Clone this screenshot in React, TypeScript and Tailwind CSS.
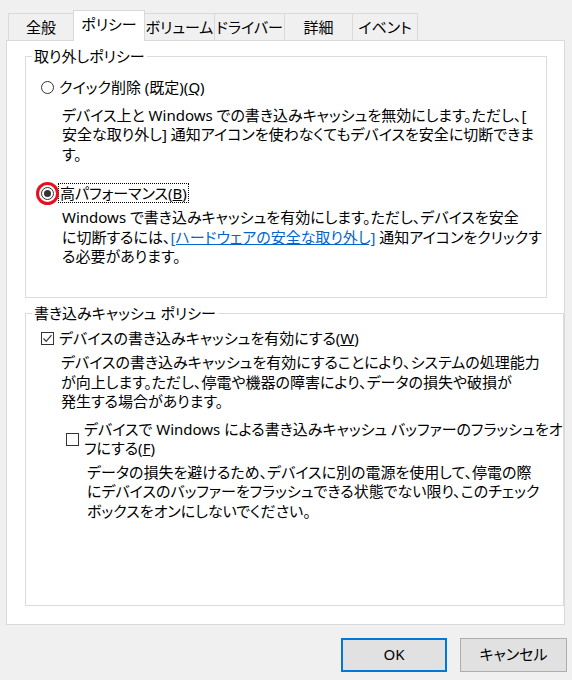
import React from "react";

const Radio = ({ checked }: { checked?: boolean }) => (
  <span className="relative flex h-[13px] w-[13px] shrink-0 items-center justify-center rounded-full border border-[#333333] bg-white">
    {checked && <span className="h-[7px] w-[7px] rounded-full bg-[#333333]" />}
  </span>
);

const Check = ({ checked }: { checked?: boolean }) => (
  <span className="flex h-[13px] w-[13px] shrink-0 items-center justify-center border border-[#333333] bg-white">
    {checked && (
      <svg width="11" height="11" viewBox="0 0 11 11">
        <polyline points="1.5,5.5 4.2,8.3 9.5,2.2" fill="none" stroke="#333333" strokeWidth="1.2" />
      </svg>
    )}
  </span>
);

const tabs = [
  { label: "全般", w: "w-[65px]", sel: false },
  { label: "ポリシー", w: "w-[72px]", sel: true },
  { label: "ボリューム", w: "w-[69px]", sel: false },
  { label: "ドライバー", w: "w-[70px]", sel: false },
  { label: "詳細", w: "w-[68px]", sel: false },
  { label: "イベント", w: "w-[66px]", sel: false },
];

export default function App() {
  return (
    <div className="h-[680px] w-[572px] overflow-hidden bg-[#f0f0f0] text-[15px] leading-[19.5px] text-black [font-family:'Noto_Sans','Noto_Sans_CJK_JP',sans-serif] [font-feature-settings:'palt']">
      {/* tabs */}
      <div className="flex items-end pl-[8px] pt-[10px]">
        {tabs.map((t, i) => (
          <div
            key={t.label}
            className={
              t.sel
                ? `relative z-10 -mb-px flex h-[31px] items-center justify-center border-x border-t border-[#d9d9d9] bg-white pb-[3px] ${t.w}`
                : `flex h-[27px] items-center justify-center border-t border-[#d9d9d9] bg-[#f0f0f0] pt-px ${t.w} ${i === 2 ? "" : "border-l"} ${i === tabs.length - 1 ? "border-r" : ""}`
            }
          >
            {t.label}
          </div>
        ))}
      </div>

      {/* panel */}
      <div className="mx-[6px] flex h-[585px] w-[559px] flex-col border border-[#d9d9d9] bg-white">
        <fieldset className="ml-[18px] mr-[17px] mt-[5px] h-[252px] border border-[#dcdcdc] px-0">
          <legend className="ml-[6px] px-[2px] leading-[20px]">取り外しポリシー</legend>
          <div className="flex flex-col pl-[15px] pt-[12px]">
            <div className="flex items-center gap-[5px]">
              <Radio />
              <span className="whitespace-nowrap">
                クイック削除 (既定)(<span className="underline">Q</span>)
              </span>
            </div>
            <p className="mt-[8px] whitespace-nowrap pl-[21px]">
              デバイス上と Windows での書き込みキャッシュを無効にします。ただし、[
              <br />
              安全な取り外し] 通知アイコンを使わなくてもデバイスを安全に切断できま
              <br />
              す。
            </p>
            <div className="mt-[19px] flex items-center gap-[4px]">
              <span className="relative flex">
                <Radio checked />
                <span className="absolute left-[-5px] top-[-5px] h-[23px] w-[23px] rounded-full border-[3px] border-[#e8101e]" />
              </span>
              <span className="whitespace-nowrap border border-dotted border-black px-[1px] leading-[18px]">
                高パフォーマンス(<span className="underline">B</span>)
              </span>
            </div>
            <p className="mt-[5px] whitespace-nowrap pl-[21px]">
              Windows で書き込みキャッシュを有効にします。ただし、デバイスを安全
              <br />
              に切断するには、<span className="text-[#0066cc] underline">[ハードウェアの安全な取り外し]</span> 通知アイコンをクリックす
              <br />
              る必要があります。
            </p>
          </div>
        </fieldset>

        <fieldset className="ml-[18px] mr-[17px] mt-[5px] h-[303px] border border-[#dcdcdc] px-0">
          <legend className="ml-[6px] px-[2px] leading-[20px]">書き込みキャッシュ ポリシー</legend>
          <div className="flex flex-col pl-[15px] pt-[6px]">
            <div className="flex items-center gap-[5px]">
              <Check checked />
              <span className="whitespace-nowrap">
                デバイスの書き込みキャッシュを有効にする(<span className="underline">W</span>)
              </span>
            </div>
            <p className="mt-[4.5px] whitespace-nowrap pl-[20px]">
              デバイスの書き込みキャッシュを有効にすることにより、システムの処理能力
              <br />
              が向上します。ただし、停電や機器の障害により、データの損失や破損が
              <br />
              発生する場合があります。
            </p>
            <div className="mt-[8px] flex items-center gap-[5px] pl-[25px]">
              <Check />
              <span className="whitespace-nowrap">
                デバイスで Windows による書き込みキャッシュ バッファーのフラッシュをオ
                <br />
                フにする(<span className="underline">F</span>)
              </span>
            </div>
            <p className="mt-[4px] whitespace-nowrap pl-[46px]">
              データの損失を避けるため、デバイスに別の電源を使用して、停電の際
              <br />
              にデバイスのバッファーをフラッシュできる状態でない限り、このチェック
              <br />
              ボックスをオンにしないでください。
            </p>
          </div>
        </fieldset>
      </div>

      {/* buttons */}
      <div className="mt-[13px] flex justify-end gap-[13px] pr-[5px]">
        <button className="flex h-[34px] w-[106px] items-center justify-center border-2 border-[#0078d7] bg-[#e1e1e1]">
          OK
        </button>
        <button className="flex h-[34px] w-[107px] items-center justify-center border border-[#adadad] bg-[#e1e1e1]">
          キャンセル
        </button>
      </div>
    </div>
  );
}
